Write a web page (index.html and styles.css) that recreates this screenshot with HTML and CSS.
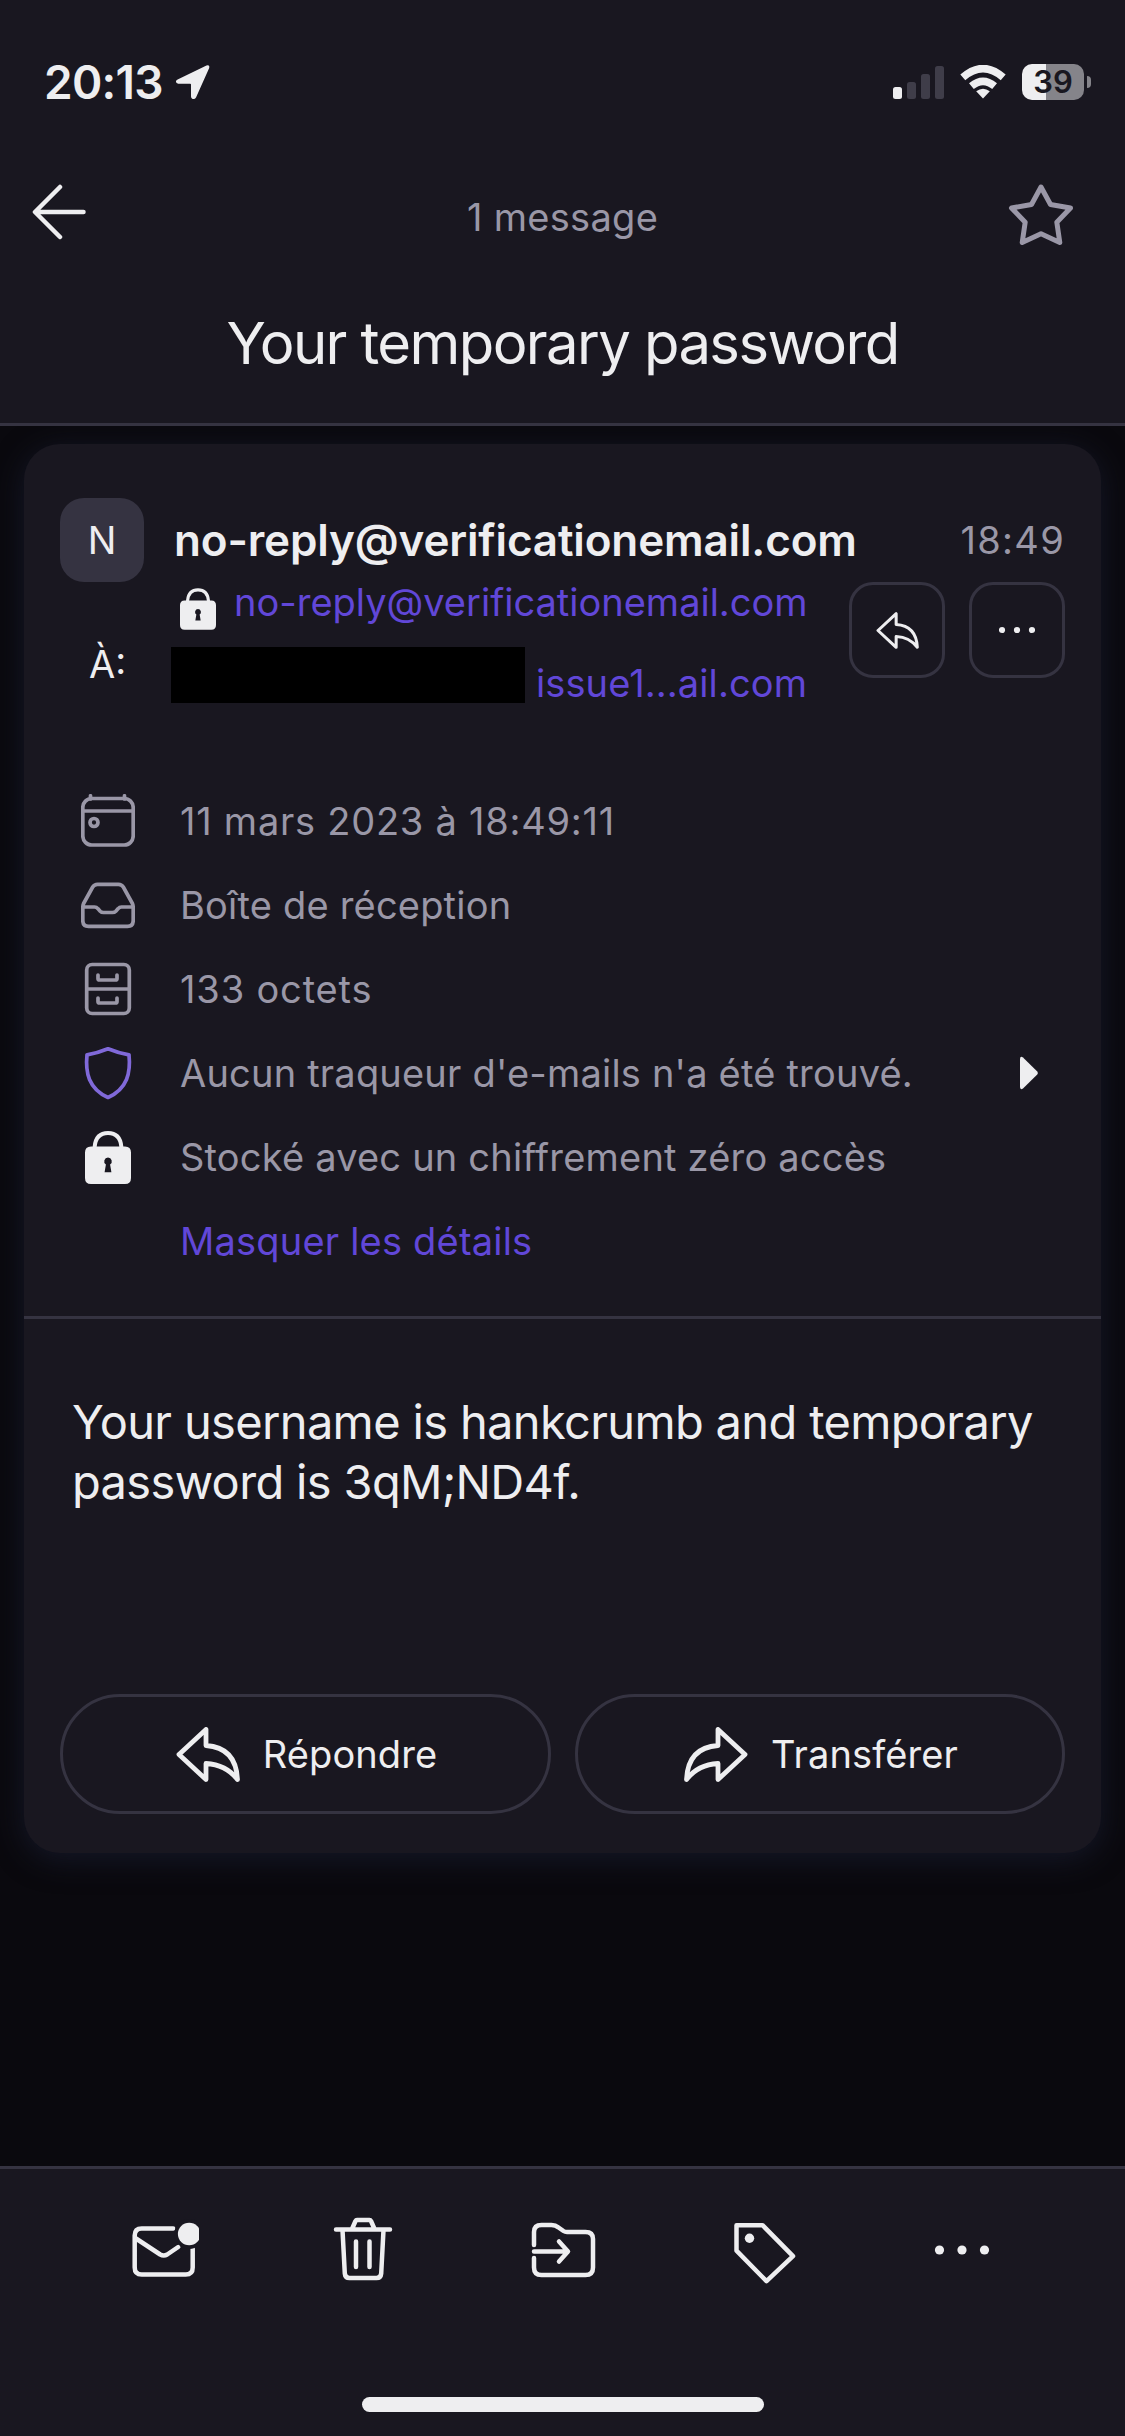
FILE: index.html
```
<!DOCTYPE html>
<html lang="fr">
<head>
<meta charset="utf-8">
<title>Your temporary password</title>
<link rel="stylesheet" href="styles.css">
</head>
<body>
<div class="screen">
  <header class="header">
    <div class="status">
      <div class="status-left">
        <span class="clock">20:13</span>
        <svg class="location" width="36" height="36" viewBox="0 0 36 36"><path d="M2.6 15.6 31.5 1.6Q34.9 .6 34.2 4L21 33.4Q19.800 35.600 17.600 34.900Q16 34.200 16 32.500V20.500Q16 19.700 15.200 19.700H3.200Q1.200 19.500 .9 17.800Q.8 16.400 2.600 15.600Z"/></svg>
      </div>
      <div class="status-right">
        <svg class="signal" width="51" height="33" viewBox="0 0 51 33"><rect x="0" y="21" width="9" height="12" rx="2.5"/><g class="off"><rect x="14" y="16" width="9" height="17" rx="2.500"/><rect x="28" y="8" width="9" height="25" rx="2.500"/><rect x="42" y="0" width="9" height="33" rx="2.500"/></g></svg>
        <svg class="wifi" width="46" height="34" viewBox="0 0 46 34"><path d="M23 33.500 16.200 26.200Q23 21.200 29.800 26.200Z"/><path d="M11.400 21.200Q23 11.600 34.600 21.200" /><path d="M2.800 12.400Q23 -5.200 43.200 12.400"/></svg>
        <div class="battery"><span class="battery-body">39</span><span class="battery-nub"></span></div>
      </div>
    </div>
    <div class="nav">
      <svg class="back" width="56" height="56" viewBox="0 0 56 56"><path d="M29 3 4 28 29 53M5 28H52.500"/></svg>
      <span class="count">1 message</span>
      <svg class="star" width="66" height="64" viewBox="0 0 66 64"><path d="M33 4 42.500 21.500 62.500 25 48.800 39.200 51.800 59.500 33 50.800 14.200 59.500 17.200 39.200 3.500 25 23.500 21.500Z"/></svg>
    </div>
    <h1 class="subject">Your temporary password</h1>
  </header>

  <main class="thread">
    <article class="card">
      <div class="from">
        <div class="avatar">N</div>
        <span class="sender">no-reply@verificationemail.com</span>
        <time class="time">18:49</time>
      </div>
      <div class="meta">
        <span class="to">À:</span>
        <div class="addresses">
          <div class="address">
            <svg class="lock" width="36" height="42" viewBox="0 0 46 53"><use href="#lock"/></svg>
            <span class="mail">no-reply@verificationemail.com</span>
          </div>
          <div class="address second">
            <span class="redacted"></span>
            <span class="mail">issue1...ail.com</span>
          </div>
        </div>
        <button class="square"><svg class="small-reply" width="43" height="37" viewBox="0 0 64 55"><use href="#reply"/></svg></button>
        <button class="square"><svg class="dots" width="36" height="8" viewBox="0 0 36 8"><circle cx="3" cy="4" r="3.100"/><circle cx="18" cy="4" r="3.100"/><circle cx="33" cy="4" r="3.100"/></svg></button>
      </div>

      <ul class="details">
        <li><svg class="line" width="54" height="54" viewBox="0 0 54 54"><rect x="1.800" y="4.500" width="50.400" height="46.500" rx="9"/><path d="M2 17H52M9.500 5V1.800M43.500 5V1.800"/><circle cx="13" cy="28.500" r="4"/></svg><span class="label date">11 mars 2023 à 18:49:11</span></li>
        <li><svg class="line" width="54" height="54" viewBox="0 0 54 54"><path d="M1.800 29.500V42.500Q1.800 48.300 7.500 48.300H46.500Q52.200 48.300 52.200 42.500V29.500Q52.200 27.500 51.400 25.500L42.300 9Q40.600 6.300 37.500 6.300H16.500Q13.400 6.300 11.700 9L2.600 25.500Q1.800 27.500 1.800 29.500M2 29H13.500Q15.500 29 16.800 30.600L19.200 33.200Q20.500 34.500 22.500 34.500H31.500Q33.500 34.500 34.800 33.200L37.200 30.600Q38.500 29 40.500 29H52"/></svg><span class="label">Boîte de réception</span></li>
        <li><svg class="line" width="54" height="54" viewBox="0 0 54 54"><rect x="5.700" y="2.500" width="42.600" height="49" rx="5.500"/><path d="M6 27H48M17 13V16.500Q17 18 18.500 18H34.500Q36 18 36 16.500V13M17 36V39.500Q17 41 18.500 41H34.500Q36 41 36 39.500V36"/></svg><span class="label size">133 octets</span></li>
        <li><svg class="line shield" width="54" height="54" viewBox="0 0 54 54"><path d="M27 2.800Q37 7 48 8.800Q49.500 23.500 45.500 33.500Q40.500 45.500 27 51.500Q13.500 45.500 8.500 33.500Q4.500 23.500 6 8.800Q17 7 27 2.800Z"/></svg><span class="label">Aucun traqueur d'e-mails n'a été trouvé.</span><svg class="caret" width="20" height="34" viewBox="0 0 20 34"><path d="M1 3Q1.200 -.3 4 1.500L18 15.200Q19.600 17 18 18.800L4 32.500Q1.200 34.300 1 31Z"/></svg></li>
        <li><svg class="lock" width="54" height="53" viewBox="-4 0 54 53"><g id="lock"><path class="shackle" d="M9.700 18V15.500Q11 2 23 2Q35 2 36.300 15.500V18"/><path fill-rule="evenodd" d="M6 15.500H40Q46 15.500 46 21.500V47Q46 53 40 53H6Q0 53 0 47V21.500Q0 15.500 6 15.500ZM23 26.500A3.900 3.900 0 0 0 20.900 33.600L19.600 41.300H26.400L25.100 33.600A3.900 3.900 0 0 0 23 26.500Z"/></g></svg><span class="label">Stocké avec un chiffrement zéro accès</span></li>
        <li><a class="label hide">Masquer les détails</a></li>
      </ul>

      <div class="body">Your username is hankcrumb and temporary<br>password is 3qM;ND4f.</div>

      <div class="actions">
        <button class="pill"><svg class="big" width="64" height="55" viewBox="0 0 64 55"><path id="reply" d="M30 2.500V18.500Q60 20.500 61.500 52.500Q50 37.500 30 36.500V52.500L3 27.500Z"/></svg><span>Répondre</span></button>
        <button class="pill"><svg class="big" width="64" height="55" viewBox="0 0 64 55"><path d="M34 2.500V18.500Q4 20.500 2.500 52.500Q14 37.500 34 36.500V52.500L61 27.500Z"/></svg><span>Transférer</span></button>
      </div>
    </article>
  </main>

  <footer class="toolbar">
    <div class="tools">
      <svg width="72" height="72" viewBox="-1.200 0 72 72"><path d="M45 12.500H13.500Q6.500 12.500 6.500 19.500V51.500Q6.500 58.500 13.500 58.500H57.500Q64.500 58.500 64.500 51.500V32.500M7 22 32 38.500Q35.500 40.500 39 38.500L50 31"/><circle class="gap" cx="61" cy="18" r="15"/><circle class="solid" cx="61" cy="18" r="11.300"/></svg>
      <svg width="72" height="72" viewBox="0 0 72 72"><path d="M9 13.500H63M25 13 28.500 5Q29 4 30 4H42.500Q43.500 4 44 5L47.500 13M15.500 14 17.800 57.500Q18.200 62 22.500 62H49.500Q53.800 62 54.200 57.500L56.500 14M29 25.500V51M42.500 25.500V51"/></svg>
      <svg width="72" height="72" viewBox="-.500 0 72 72"><path d="M6.500 29V16Q6.500 9 14 9H24Q28 9 31 11.500L36 15Q37.500 16 39.500 16H58Q65.500 16 65.500 23V51.500Q65.500 59 58 59H14Q6.500 59 6.500 51.500V42M6.500 35.500H40M31.500 25.500 40.500 35.500 31.500 45.500"/></svg>
      <svg width="72" height="72" viewBox="-2 -.700 72 72"><path d="M8.500 8.500H34.500L65 39.500 38.500 64.500 8.500 34Z"/><circle class="solid" cx="21.500" cy="21.500" r="4.700"/></svg>
      <svg width="72" height="72" viewBox="0 0 72 72"><g class="solid"><circle cx="13.500" cy="34" r="4.600"/><circle cx="36" cy="34" r="4.600"/><circle cx="58.500" cy="34" r="4.600"/></g></svg>
    </div>
    <div class="home"></div>
  </footer>
</div>
</body>
</html>
```
FILE: styles.css
```
* { box-sizing: border-box; }
body { margin: 0; background: #0a090e; font-family: Inter, "Liberation Sans", sans-serif; color: #eeeef0; }
svg { display: block; flex: none; fill: none; stroke-linecap: round; stroke-linejoin: round; }
button { margin: 0; padding: 0; background: none; font: inherit; color: inherit; border: 3px solid #353341; display: flex; align-items: center; justify-content: center; }
.screen { width: 1125px; height: 2436px; display: flex; flex-direction: column; overflow: hidden; }

.header { height: 426px; background: #191720; border-bottom: 3px solid #353341; flex: none; position: relative; z-index: 1; }
.status { height: 164px; padding: 0 34px 0 44px; display: flex; justify-content: space-between; align-items: center; }
.status-left, .status-right, .battery { display: flex; align-items: center; }
.status-left { gap: 12px; }
.clock { font-size: 46px; font-weight: 600; line-height: 60px; letter-spacing: -.7px; }
.location, .signal { fill: #eeeef0; }
.signal .off { fill: #3f3d49; }
.signal { margin-right: 16px; }
.wifi { margin-right: 16px; fill: #eeeef0; }
.wifi path + path { fill: none; stroke: #eeeef0; stroke-width: 7.500; stroke-linecap: butt; }
.battery { gap: 3px; }
.battery-body { width: 62px; height: 36px; border-radius: 10px; background: linear-gradient(90deg, #eeeef0 24px, #85848a 24px); color: #191720; font-size: 31px; font-weight: 600; line-height: 36px; text-align: center; }
.battery-nub { width: 4px; height: 12px; border-radius: 0 4px 4px 0; background: #85848a; }
.nav { height: 102px; padding: 0 51px; display: grid; grid-template-columns: 66px 1fr 66px; align-items: center; }
.back { stroke: #eeeef0; stroke-width: 4.500; margin: -6px 0 0 -20px; }
.count { font-size: 38px; line-height: 48px; text-align: center; color: #9a97a7; padding-top: 4px; letter-spacing: .3px; }
.star { stroke: #9a97a7; stroke-width: 5; }
.subject { margin: 45px 0 0; font-size: 58px; font-weight: 400; line-height: 64px; text-align: center; letter-spacing: -1.6px; }

.thread { flex: 1; padding: 18px 24px 0; }
.card { height: 1409px; background: #191720; border-radius: 36px; box-shadow: 0 6px 30px #151828; }
.from { padding: 54px 36px 0; display: flex; align-items: center; }
.avatar { width: 84px; height: 84px; border-radius: 24px; background: #353341; font-size: 38px; line-height: 84px; text-align: center; margin-right: 30px; }
.sender { font-size: 44px; font-weight: 600; line-height: 60px; flex: 1; white-space: nowrap; letter-spacing: -.15px; }
.time { font-size: 38px; color: #9a97a7; letter-spacing: 1.300px; }
.meta { height: 197px; padding: 0 36px; display: flex; align-items: flex-start; }
.to { width: 111px; padding-left: 29px; font-size: 38px; line-height: 48px; margin-top: 58px; }
.addresses { width: 678px; }
.address { display: flex; align-items: center; height: 40px; gap: 18px; padding-left: 9px; }
.address .lock { margin-top: 14px; }
.second { height: 56px; margin-top: 25px; gap: 11px; padding-left: 0; }
.redacted { width: 354px; height: 56px; background: #000; }
.second .mail { padding-top: 15px; letter-spacing: .1px; }
.mail { font-size: 38px; line-height: 40px; color: #6147d8; white-space: nowrap; }
.square { width: 96px; height: 96px; border-radius: 24px; flex: none; margin-left: 24px; }
.addresses + .square { margin-left: 0; }
.small-reply { stroke: #eeeef0; stroke-width: 4.500; }
.dots { fill: #eeeef0; }
.lock { fill: #eeeef0; }
.shackle { fill: none; stroke: #eeeef0; stroke-width: 4; }

.details { list-style: none; margin: 0; padding: 0 57px 33px; border-bottom: 3px solid #353341; }
.details li { height: 84px; display: flex; align-items: center; }
.line { stroke: #9a97a7; stroke-width: 3.700; }
.shield { stroke: #8069d9; }
.label { margin-left: 45px; font-size: 38px; line-height: 48px; color: #9a97a7; padding-bottom: 1px; white-space: nowrap; letter-spacing: .2px; }
.date { letter-spacing: .75px; }
.size { letter-spacing: .85px; }
.hide { margin-left: 99px; color: #6147d8; }
.caret { fill: #eeeef0; margin-left: auto; margin-right: 5px; }

.body { height: 375px; padding: 73px 0 0 48px; font-size: 47px; line-height: 60px; white-space: nowrap; letter-spacing: -.65px; }
.actions { display: grid; grid-template-columns: 491px 490px; gap: 24px; padding: 0 36px; }
.pill { height: 120px; border-radius: 60px; gap: 23px; padding-left: 2px; font-size: 38px; line-height: 48px; letter-spacing: .1px; }
.big { stroke: #eeeef0; stroke-width: 4.800; }

.toolbar { height: 270px; background: #191720; border-top: 3px solid #353341; flex: none; }
.tools { display: flex; justify-content: space-between; padding: 47px 127px 0; }
.tools svg { stroke: #eeeef0; stroke-width: 4.500; }
.tools .solid { fill: #eeeef0; stroke: none; }
.tools .gap { fill: #191720; stroke: none; }
.home { width: 402px; height: 15px; border-radius: 8px; background: #eeeef0; margin: 109px auto 0; }
```
